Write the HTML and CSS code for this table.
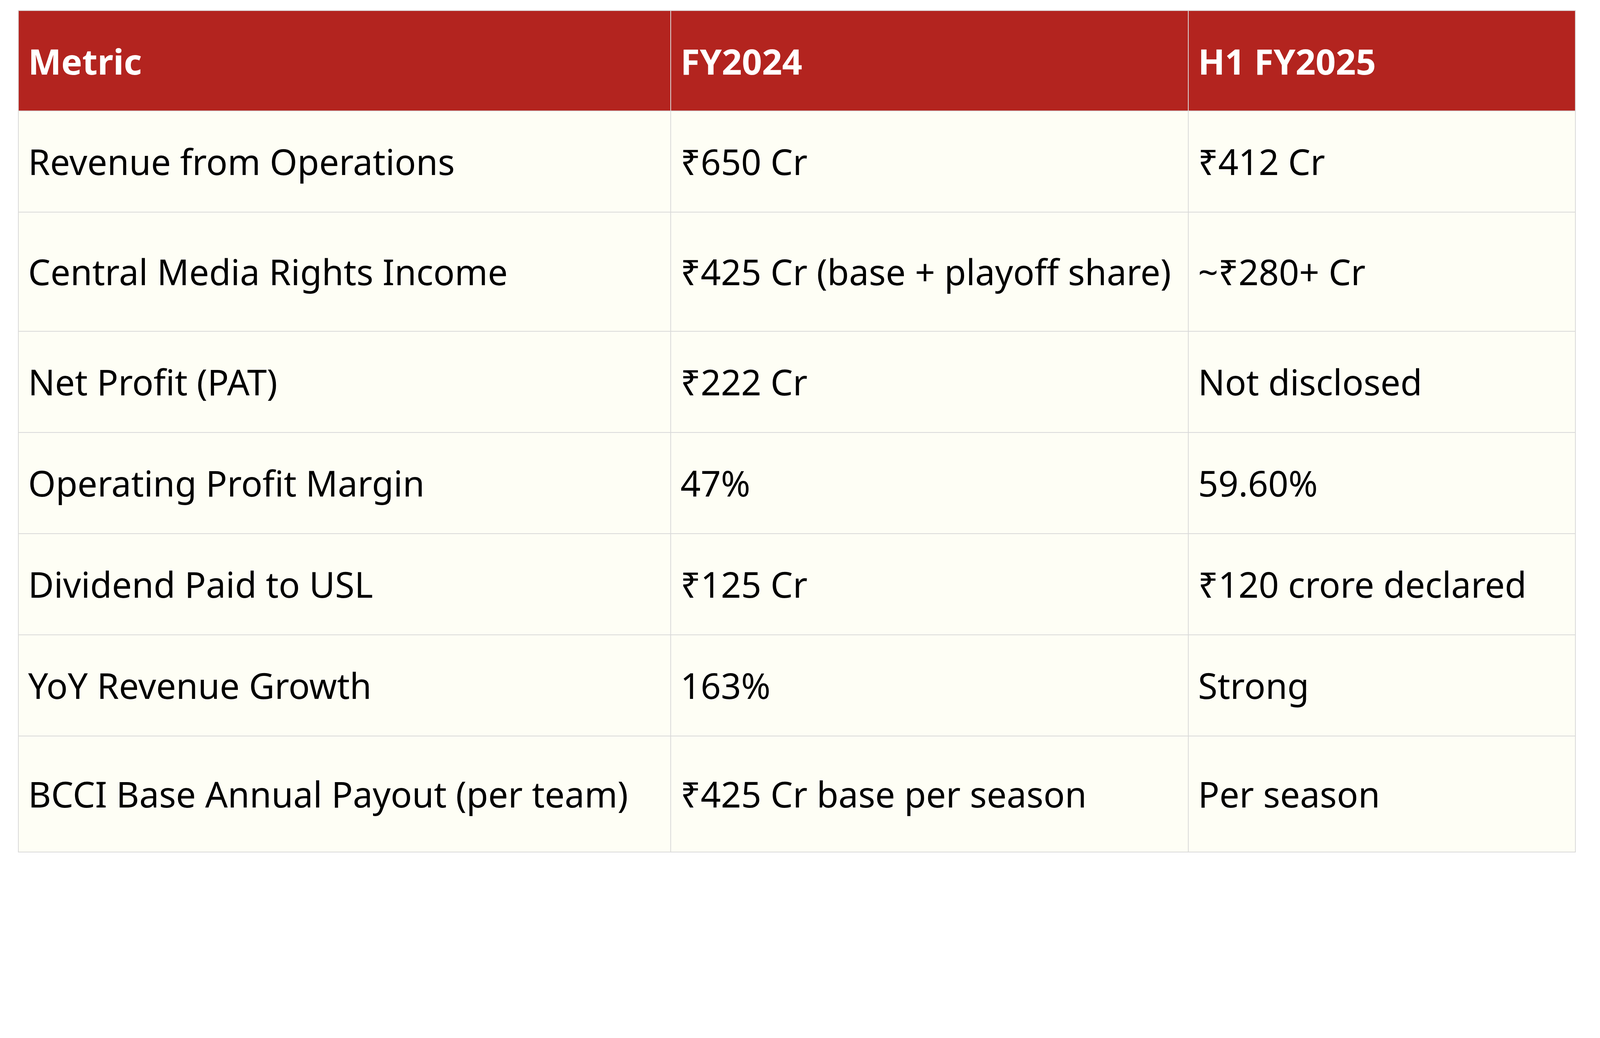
FILE: index.html
```html
<!DOCTYPE html>
<html lang="en">
<head>
<meta charset="utf-8">
<title>Financial Metrics</title>
<link rel="stylesheet" href="styles.css">
</head>
<body>
<table class="metrics">
  <colgroup>
    <col class="col-metric">
    <col class="col-fy24">
    <col class="col-h1">
  </colgroup>
  <thead>
    <tr class="head-row">
      <th>Metric</th>
      <th>FY2024</th>
      <th>H1 FY2025</th>
    </tr>
  </thead>
  <tbody>
    <tr class="row">
      <td>Revenue from Operations</td>
      <td>₹650 Cr</td>
      <td>₹412 Cr</td>
    </tr>
    <tr class="row row-tall">
      <td>Central Media Rights Income</td>
      <td>₹425 Cr (base + playoff share)</td>
      <td>~₹280+ Cr</td>
    </tr>
    <tr class="row">
      <td>Net Profit (PAT)</td>
      <td>₹222 Cr</td>
      <td>Not disclosed</td>
    </tr>
    <tr class="row">
      <td>Operating Profit Margin</td>
      <td>47%</td>
      <td>59.60%</td>
    </tr>
    <tr class="row">
      <td>Dividend Paid to USL</td>
      <td>₹125 Cr</td>
      <td>₹120 crore declared</td>
    </tr>
    <tr class="row">
      <td>YoY Revenue Growth</td>
      <td>163%</td>
      <td>Strong</td>
    </tr>
    <tr class="row row-last">
      <td>BCCI Base Annual Payout (per team)</td>
      <td>₹425 Cr base per season</td>
      <td>Per season</td>
    </tr>
  </tbody>
</table>
</body>
</html>
```
FILE: styles.css
```css
html, body {
  margin: 0;
  padding: 0;
  background: #ffffff;
}

body {
  padding: 26px 0 0 46px;
  font-family: "Noto Sans", Roboto, "DejaVu Sans", sans-serif;
  color: #000000;
}

.metrics {
  border-collapse: collapse;
  table-layout: fixed;
  width: 3986px;
  border: 2.5px solid #d9d9d9;
}

.col-metric { width: 1670px; }
.col-fy24 { width: 1325px; }
.col-h1 { width: 991px; }

.metrics th,
.metrics td {
  border: 2.5px solid #d9d9d9;
  padding: 0 24px;
  text-align: left;
  vertical-align: middle;
  line-height: 1;
  white-space: nowrap;
}

.metrics th {
  background: #b3241f;
  color: #ffffff;
  font-size: 90px;
  font-weight: 700;
}

.head-row { height: 257px; }

.metrics td {
  background: #fefef5;
  font-size: 90.5px;
  font-weight: 400;
}

.row { height: 259px; }
.row-tall { height: 305px; }
.row-last { height: 297px; }
```
